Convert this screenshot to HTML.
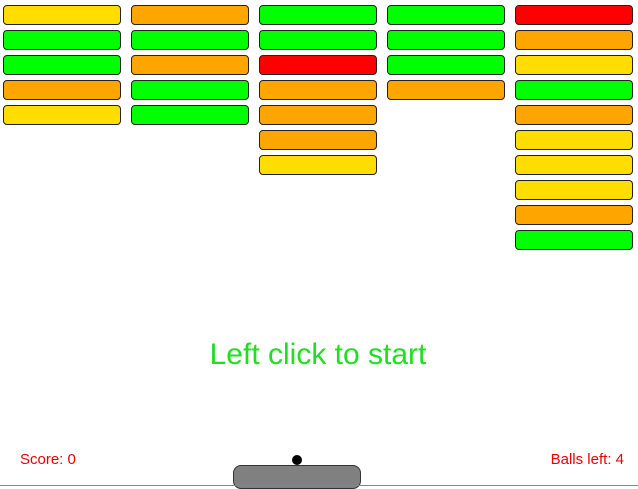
<!DOCTYPE html><html><head><style>
body{margin:0;width:638px;height:486px;background:#fff;position:relative;overflow:hidden;font-family:"Liberation Sans",sans-serif}
.b{position:absolute;width:116px;height:18px;border:1px solid #222;border-radius:4px;box-sizing:content-box}
.Y{background:#FFDD00}.G{background:#00FF00}.O{background:#FFA500}.R{background:#FF0000}
.t{position:absolute;color:#e00;font-size:15px}
</style></head><body>
<div id="g"></div>
<script>
var cols=["YGGOY","OGOGG","GGROOOY","GGGO","ROYGOYYYOG"];var h="";
cols.forEach(function(c,i){for(var j=0;j<c.length;j++){h+='<div class="b '+c[j]+'" style="left:'+(3+i*128)+'px;top:'+(5+j*25)+'px"></div>';}});
document.getElementById("g").innerHTML=h;
</script>
<div style="position:absolute;left:0;width:636px;top:338px;text-align:center;color:#22dd22;font-size:30px">Left click to start</div>
<div class="t" style="left:20px;top:451px">Score: 0</div>
<div class="t" style="right:14px;top:451px">Balls left: 4</div>
<div style="position:absolute;left:292px;top:455px;width:10px;height:10px;border-radius:50%;background:#000"></div>
<div style="position:absolute;left:233px;top:465px;width:126px;height:22px;background:#808080;border:1px solid #333;border-radius:8px"></div>
<div style="position:absolute;left:0;top:485px;width:638px;height:1px;background:#5a8fc0"></div>
</body></html>
